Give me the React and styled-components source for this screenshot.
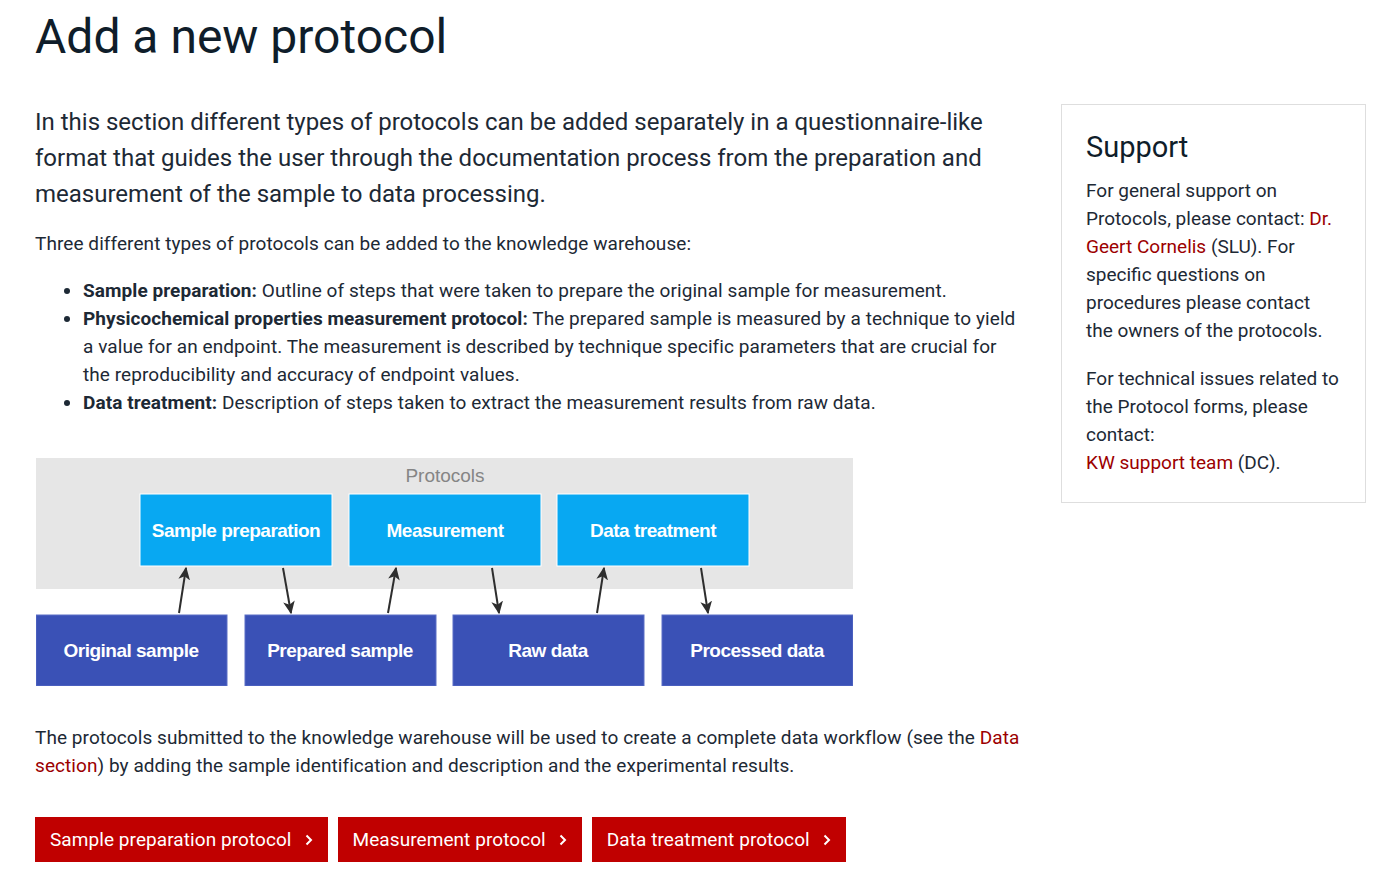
import React from "react";
import styled, { createGlobalStyle } from "styled-components";

const GlobalStyle = createGlobalStyle`
  html, body {
    margin: 0;
    padding: 0;
    background: #fff;
  }
  body {
    font-family: Roboto, "Liberation Sans", sans-serif;
    color: #1d2935;
  }
`;

const Page = styled.div`
  padding: 0 27px 0 35px;
`;

const Title = styled.h1`
  margin: 0;
  padding-top: 8px;
  font-size: 48px;
  line-height: 58px;
  font-weight: 400;
  color: #0f1d2a;
`;

const Layout = styled.div`
  display: grid;
  grid-template-columns: 990px 305px;
  column-gap: 36px;
  margin-top: 38px;
  align-items: start;
`;

const Main = styled.div`
  display: flex;
  flex-direction: column;
`;

const Lead = styled.p`
  margin: 0 0 18px;
  font-size: 24px;
  line-height: 36px;
`;

const Text = styled.p`
  margin: 0;
  font-size: 19px;
  line-height: 28px;
  letter-spacing: 0.07px;
`;

const List = styled.ul`
  margin: 19px 0 0;
  padding-left: 48px;
  font-size: 19px;
  line-height: 28px;
  letter-spacing: 0.07px;
  & b {
    font-weight: 700;
  }
`;

const Link = styled.a`
  color: #9c0000;
  text-decoration: none;
`;

const Diagram = styled.svg`
  display: block;
  margin: 41px 0 38px 1px;
`;

const Buttons = styled.div`
  display: flex;
  gap: 10px;
  margin-top: 37px;
`;

const Button = styled.a`
  display: inline-flex;
  align-items: center;
  gap: 13px;
  height: 45px;
  padding: 0 15px 0 15px;
  background: #c00000;
  color: #fff;
  font-size: 19px;
  letter-spacing: 0.07px;
  text-decoration: none;
  box-sizing: border-box;
`;

const Sidebar = styled.aside`
  border: 1px solid #dedede;
  padding: 24px 24px 25px;
  box-sizing: border-box;
`;

const SideTitle = styled.h2`
  margin: 0 0 12px;
  font-size: 29px;
  line-height: 36px;
  font-weight: 400;
  color: #0f1d2a;
`;

const SideText = styled.p`
  margin: 0 0 20px;
  font-size: 19px;
  line-height: 28px;
  &:last-child {
    margin-bottom: 0;
  }
`;

const Chevron = () => (
  <svg width="8" height="12" viewBox="0 0 8 12">
    <path d="M1.5 1.5 L6 6 L1.5 10.5" fill="none" stroke="#fff" strokeWidth="2" />
  </svg>
);

const topBoxes = [
  { x: 140, label: "Sample preparation" },
  { x: 349, label: "Measurement" },
  { x: 557, label: "Data treatment" },
];

const bottomBoxes = [
  { x: 36, label: "Original sample" },
  { x: 245, label: "Prepared sample" },
  { x: 453, label: "Raw data" },
  { x: 662, label: "Processed data" },
];

const arrows = [
  [179, 613, 186, 568],
  [283, 568, 291, 613],
  [388, 613, 396, 568],
  [492, 568, 499, 613],
  [597, 613, 604, 568],
  [701, 568, 708, 613],
];

const boxFont = {
  fontFamily: "'Liberation Sans', Arial, sans-serif",
  fontSize: 19,
  fontWeight: 700,
  letterSpacing: -0.5,
};

function ProtocolDiagram() {
  return (
    <Diagram width="817" height="228" viewBox="36 458 817 228">
      <defs>
        <marker
          id="head"
          viewBox="0 0 10 10"
          refX="9"
          refY="5"
          markerWidth="6.5"
          markerHeight="6.5"
          orient="auto"
        >
          <path d="M0 0.5 L10 5 L0 9.5 L2.5 5 Z" fill="#2e2e2e" />
        </marker>
      </defs>
      <rect x="36" y="458" width="817" height="131" fill="#e6e6e6" />
      <text
        x="445"
        y="482"
        textAnchor="middle"
        fontFamily="'Liberation Sans', Arial, sans-serif"
        fontSize="19"
        fill="#858585"
      >
        Protocols
      </text>
      {topBoxes.map((b) => (
        <g key={b.label}>
          <rect x={b.x} y="494" width="192" height="72" fill="#08a8f2" stroke="#fff" strokeWidth="1" />
          <text x={b.x + 96} y="537" textAnchor="middle" fill="#fff" style={boxFont}>
            {b.label}
          </text>
        </g>
      ))}
      {bottomBoxes.map((b) => (
        <g key={b.label}>
          <rect x={b.x} y="615" width="191" height="71" fill="#3a51b6" stroke="#5a6fc6" strokeWidth="1" />
          <text x={b.x + 95} y="657" textAnchor="middle" fill="#fff" style={boxFont}>
            {b.label}
          </text>
        </g>
      ))}
      {arrows.map(([x1, y1, x2, y2], i) => (
        <line
          key={i}
          x1={x1}
          y1={y1}
          x2={x2}
          y2={y2}
          stroke="#2e2e2e"
          strokeWidth="2"
          markerEnd="url(#head)"
        />
      ))}
    </Diagram>
  );
}

export default function App() {
  return (
    <Page>
      <GlobalStyle />
      <Title>Add a new protocol</Title>
      <Layout>
        <Main>
          <Lead>
            In this section different types of protocols can be added separately in a
            questionnaire-like format that guides the user through the documentation process
            from the preparation and measurement of the sample to data processing.
          </Lead>
          <Text>
            Three different types of protocols can be added to the knowledge warehouse:
          </Text>
          <List>
            <li>
              <b>Sample preparation:</b> Outline of steps that were taken to prepare the
              original sample for measurement.
            </li>
            <li>
              <b>Physicochemical properties measurement protocol:</b> The prepared sample is
              measured by a technique to yield a value for an endpoint. The measurement is
              described by technique specific parameters that are crucial for the
              reproducibility and accuracy of endpoint values.
            </li>
            <li>
              <b>Data treatment:</b> Description of steps taken to extract the measurement
              results from raw data.
            </li>
          </List>
          <ProtocolDiagram />
          <Text>
            The protocols submitted to the knowledge warehouse will be used to create a
            complete data workflow (see the <Link href="#">Data section</Link>) by adding the
            sample identification and description and the experimental results.
          </Text>
          <Buttons>
            <Button href="#">
              Sample preparation protocol <Chevron />
            </Button>
            <Button href="#">
              Measurement protocol <Chevron />
            </Button>
            <Button href="#">
              Data treatment protocol <Chevron />
            </Button>
          </Buttons>
        </Main>
        <Sidebar>
          <SideTitle>Support</SideTitle>
          <SideText>
            For general support on Protocols, please contact:{" "}
            <Link href="#">Dr. Geert Cornelis</Link> (SLU). For specific questions on
            procedures please contact the owners of the protocols.
          </SideText>
          <SideText>
            For technical issues related to the Protocol forms, please contact:
            <br />
            <Link href="#">KW support team</Link> (DC).
          </SideText>
        </Sidebar>
      </Layout>
    </Page>
  );
}
